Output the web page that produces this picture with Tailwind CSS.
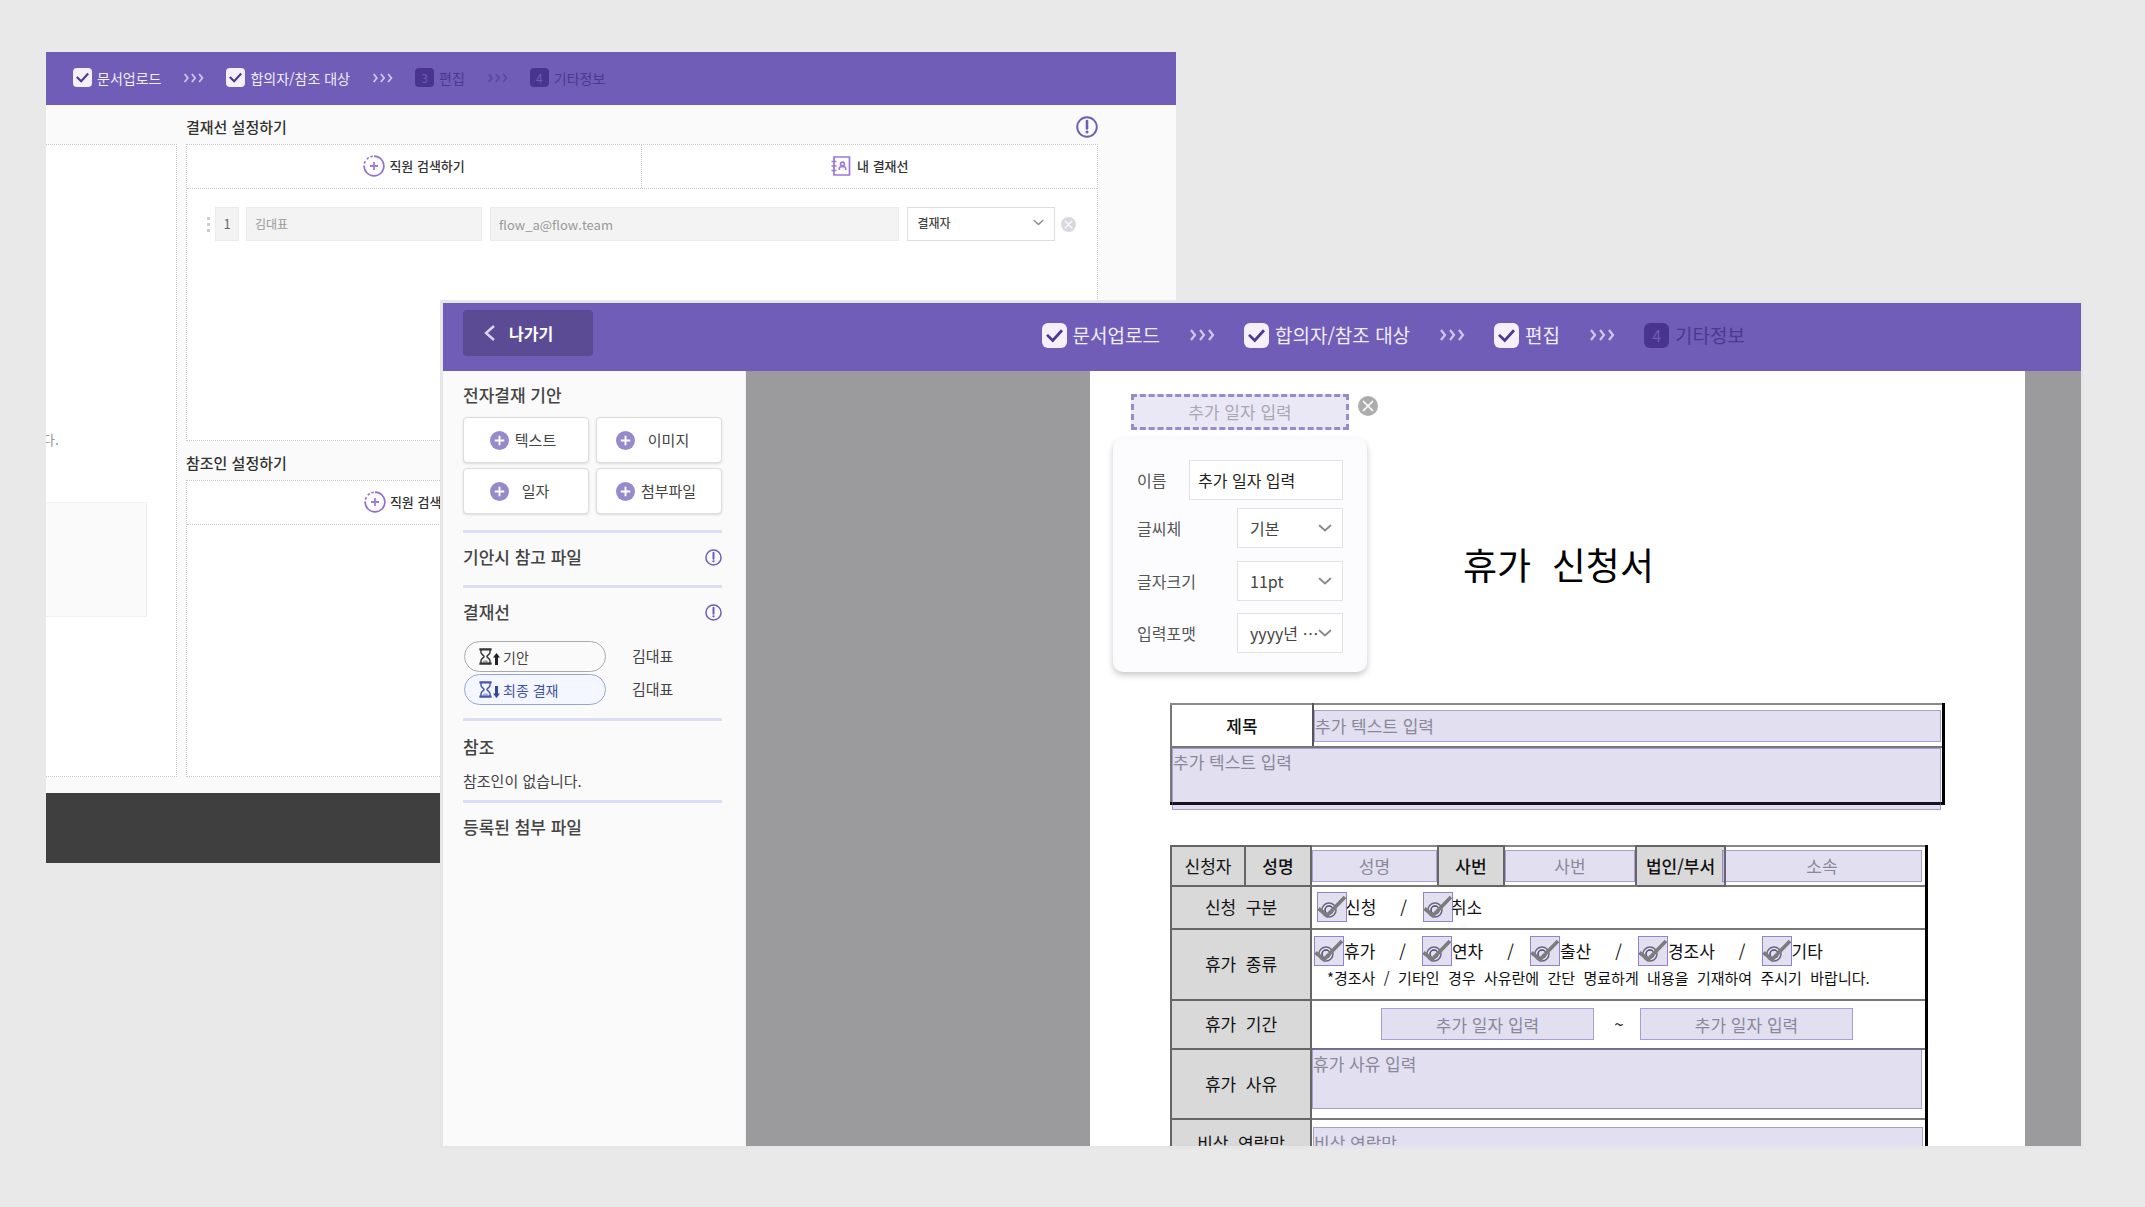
<!DOCTYPE html>
<html lang="ko">
<head>
<meta charset="utf-8">
<title>전자결재</title>
<script src="https://cdn.jsdelivr.net/npm/@tailwindcss/browser@4"></script>
</head>
<body class="bg-[#e9e9e9] font-['Noto_Sans_CJK_KR',sans-serif] text-[#333]">
<svg class="hidden">
  <symbol id="check" viewBox="0 0 20 20"><path d="M4 9.5 8.6 14 16 5.8" fill="none" stroke="#4b3796" stroke-width="2.2"/></symbol>
  <symbol id="arrows" viewBox="0 0 26 12"><path d="M2 1l4 5-4 5M11 1l4 5-4 5M20 1l4 5-4 5" fill="none" stroke="currentColor" stroke-width="2.2"/></symbol>
  <symbol id="info" viewBox="0 0 22 22"><circle cx="11" cy="11" r="9.8" fill="none" stroke="#705db8" stroke-width="1.9"/><path d="M11 5v7.5" stroke="#705db8" stroke-width="2.6" stroke-linecap="round"/><circle cx="11" cy="16" r="1.5" fill="#705db8"/></symbol>
  <symbol id="search-plus" viewBox="0 0 22 22"><circle cx="11" cy="11" r="9.9" fill="none" stroke="#8f6fd3" stroke-width="1.6" pathLength="100" stroke-dasharray="76 3 4 4 4 3 4 2" transform="rotate(-90 11 11)"/><path d="M11 7v8M7 11h8" stroke="#a07be0" stroke-width="1.8"/></symbol>
  <symbol id="book" viewBox="0 0 20 20"><path d="M3 1h15.500v18H3z" fill="none" stroke="#9a78dc" stroke-width="1.7"/><path d="M0.500 5.500h5M0.500 10h5M0.500 14.500h5" stroke="#9a78dc" stroke-width="1.7"/><circle cx="11.500" cy="8" r="1.9" fill="none" stroke="#9a78dc" stroke-width="1.6"/><path d="M8.300 14v-1.300a2 2 0 0 1 2-2h2.400a2 2 0 0 1 2 2V14" fill="none" stroke="#9a78dc" stroke-width="1.6"/></symbol>
  <symbol id="down" viewBox="0 0 14 8"><path d="M1.500 1.500 7 6.500l5.500-5" fill="none" stroke="#8a8a8a" stroke-width="1.8" stroke-linecap="round" stroke-linejoin="round"/></symbol>
  <symbol id="close" viewBox="0 0 20 20"><circle cx="10" cy="10" r="10" fill="currentColor"/><path d="M5.500 5.500l9 9M14.500 5.500l-9 9" stroke="#fff" stroke-width="1.7" stroke-linecap="round"/></symbol>
  <symbol id="add" viewBox="0 0 20 20"><circle cx="10" cy="10" r="10" fill="#978acb"/><path d="M10 5v10M5 10h10" stroke="#fff" stroke-width="2"/></symbol>
  <symbol id="hourglass" viewBox="0 0 13 18"><path d="M0 1.400h13M0 16.600h13" stroke="currentColor" stroke-width="2.4"/><path d="M1.700 2v2.500C1.700 7 5 7.800 5 9s-3.300 2-3.300 4.500V16M11.300 2v2.500C11.300 7 8 7.800 8 9s3.300 2 3.300 4.500V16" fill="none" stroke="currentColor" stroke-width="1.500"/><path d="M3 15.500c.6-2 2-2.500 3.500-2.500s2.900.5 3.500 2.500z" fill="currentColor" opacity=".4"/></symbol>
  <symbol id="stamp" viewBox="0 0 30 30"><circle cx="12" cy="18" r="7" fill="none" stroke="#6b6680" stroke-width="1.500"/><circle cx="12" cy="18" r="4" fill="none" stroke="#4f4a66" stroke-width="1.500"/><path d="M1.500 16.500 10 23.500 28 5" fill="none" stroke="#7c7c7c" stroke-width="3.600"/></symbol>
</svg>

<div class="relative h-screen min-h-[900px] w-full overflow-hidden">

  <!-- approval line window -->
  <section class="absolute top-[52px] left-[46px] flex h-[811px] w-[52.7%] flex-col overflow-hidden bg-[#fafafa]">
    <header class="flex h-[53px] shrink-0 items-center gap-[22px] bg-[#705db8] pb-0.5 pl-[27px] text-sm text-[#f1edfb]">
      <div class="flex items-center gap-[5px]"><span class="size-[19px] rounded bg-[#f4f1fd]"><svg class="size-[19px]"><use href="#check"/></svg></span>문서업로드</div>
      <svg class="h-[10px] w-[21px] text-[#cfc6ec]"><use href="#arrows"/></svg>
      <div class="flex items-center gap-[5px]"><span class="size-[19px] rounded bg-[#f4f1fd]"><svg class="size-[19px]"><use href="#check"/></svg></span>합의자/참조 대상</div>
      <svg class="h-[10px] w-[21px] text-[#cfc6ec]"><use href="#arrows"/></svg>
      <div class="flex items-center gap-[5px] text-[#4a3a8c]"><span class="size-[19px] rounded bg-[#49358f] text-center text-xs leading-[19px] text-[#705db8]">3</span>편집</div>
      <svg class="h-[10px] w-[21px] text-[#5a48a2]"><use href="#arrows"/></svg>
      <div class="flex items-center gap-[5px] text-[#4a3a8c]"><span class="size-[19px] rounded bg-[#49358f] text-center text-xs leading-[19px] text-[#705db8]">4</span>기타정보</div>
    </header>
    <div class="flex min-h-0 flex-1 gap-[9px] pr-[78px] pb-4">
      <div class="mt-[39px] w-[131px] shrink-0 border border-l-0 border-dotted border-[#c8c8c8] bg-white">
        <p class="mt-[282px] h-6 text-sm leading-6 text-[#999]"><span class="-ml-1">다.</span></p>
        <div class="mt-[51px] h-[115px] w-[101px] border border-l-0 border-[#f0f0f0] bg-[#fafafa]"></div>
      </div>
      <div class="flex min-w-0 flex-1 flex-col">
        <div class="flex h-[39px] shrink-0 items-center justify-between pt-1">
          <h2 class="text-[15px] leading-6 font-medium">결재선 설정하기</h2>
          <button aria-label="도움말"><svg class="size-[22px]"><use href="#info"/></svg></button>
        </div>
        <div class="h-[297px] shrink-0 border border-dotted border-[#c8c8c8] bg-white">
          <div class="grid h-[44px] grid-cols-2 border-b border-dotted border-[#c8c8c8] text-[13px] font-medium">
            <button class="flex items-center justify-center gap-1 border-r border-dotted border-[#c8c8c8] pb-0.5"><svg class="size-[22px]"><use href="#search-plus"/></svg>직원 검색하기</button>
            <button class="flex items-center justify-center gap-1.5 pb-0.5"><svg class="size-5"><use href="#book"/></svg>내 결재선</button>
          </div>
          <div class="mt-[18px] flex h-[34px] items-center pr-[21px] pl-5 text-[13px]">
            <svg class="mr-1 h-4 w-1 shrink-0" viewBox="0 0 4 16" fill="#ccc"><path d="M0 1h3v3H0zM0 7h3v3H0zM0 13h3v3H0z"/></svg>
            <span class="w-6 shrink-0 border border-[#ebebeb] bg-[#f3f3f3] text-center leading-8 text-[#666]">1</span>
            <input aria-label="이름" disabled value="김대표" class="ml-[7px] h-[34px] w-[236px] shrink-0 border border-[#ebebeb] bg-[#f3f3f3] px-2 pb-0.5 text-xs text-[#999]">
            <input aria-label="이메일" disabled value="flow_a@flow.team" class="ml-2 h-[34px] min-w-0 flex-1 border border-[#ebebeb] bg-[#f3f3f3] px-2 text-[13px] text-[#999]">
            <div class="relative ml-2 w-[148px] shrink-0">
              <select aria-label="결재 구분" class="h-[34px] w-full appearance-none border border-[#dedede] bg-white px-[9px] pb-0.5 text-xs font-medium text-[#444]"><option>결재자</option></select>
              <svg class="pointer-events-none absolute top-3 right-[11px] h-[7px] w-[11px]"><use href="#down"/></svg>
            </div>
            <button aria-label="삭제" class="ml-1.5 shrink-0"><svg class="size-[15px] text-[#d9d7df]"><use href="#close"/></svg></button>
          </div>
        </div>
        <h2 class="mt-2.5 mb-[5px] text-[15px] leading-6 font-medium">참조인 설정하기</h2>
        <div class="flex-1 border border-dotted border-[#c8c8c8] bg-white">
          <div class="grid h-[44px] grid-cols-2 border-b border-dotted border-[#c8c8c8] text-[13px] font-medium">
            <button class="flex items-center justify-center gap-1 pb-0.5"><svg class="size-[22px]"><use href="#search-plus"/></svg>직원 검색하기</button>
          </div>
        </div>
      </div>
    </div>
    <footer class="h-[70px] shrink-0 bg-[#3f3f3f]"></footer>
  </section>

  <!-- document editor window -->
  <section class="absolute top-[300px] right-[61px] bottom-[58px] left-[440px] flex flex-col overflow-hidden border-3 border-[#e6e6e6] bg-[#9b9b9d]">
    <header class="flex h-[68px] shrink-0 items-center bg-[#705db8] pr-[336px] pb-1 pl-5 text-[19px] text-[#f1edfb]">
      <button class="-mt-1 flex h-[46px] w-[130px] items-center gap-3.5 rounded bg-[#5a4b94] pl-[21px] text-base font-bold text-white"><svg class="h-4 w-[11px]" viewBox="0 0 11 16" fill="none" stroke="#dcd5f3" stroke-width="2.400"><path d="M10 1 2 8l8 7"/></svg>나가기</button>
      <div class="ml-auto flex items-center gap-[29px]">
        <div class="flex items-center gap-1.5"><span class="size-[25px] rounded-md bg-[#f4f1fd]"><svg class="size-[25px]"><use href="#check"/></svg></span>문서업로드</div>
        <svg class="h-3 w-[26px] text-[#cfc6ec]"><use href="#arrows"/></svg>
        <div class="flex items-center gap-1.5"><span class="size-[25px] rounded-md bg-[#f4f1fd]"><svg class="size-[25px]"><use href="#check"/></svg></span>합의자/참조 대상</div>
        <svg class="h-3 w-[26px] text-[#cfc6ec]"><use href="#arrows"/></svg>
        <div class="flex items-center gap-1.5"><span class="size-[25px] rounded-md bg-[#f4f1fd]"><svg class="size-[25px]"><use href="#check"/></svg></span>편집</div>
        <svg class="h-3 w-[26px] text-[#cfc6ec]"><use href="#arrows"/></svg>
        <div class="flex items-center gap-1.5 text-[#4a3a8c]"><span class="size-[25px] rounded-md bg-[#49358f] text-center text-base leading-[25px] text-[#705db8]">4</span>기타정보</div>
      </div>
    </header>

    <div class="flex min-h-0 flex-1">
      <aside class="w-[303px] shrink-0 border-r border-[#eee] bg-[#fafafa] pr-[23px] pl-5 text-[15px] text-[#444]">
        <h2 class="pt-3 pb-2.5 text-[17px] leading-6 font-medium">전자결재 기안</h2>
        <div class="grid grid-cols-2 gap-x-[7px] gap-y-[5px]">
          <button class="flex h-[46px] items-center justify-center gap-1.5 rounded border border-[#ddd] bg-white pr-1.5 shadow-sm"><svg class="size-[19px]"><use href="#add"/></svg><span class="w-[42px]">텍스트</span></button>
          <button class="flex h-[46px] items-center justify-center gap-1.5 rounded border border-[#ddd] bg-white pr-1.5 shadow-sm"><svg class="size-[19px]"><use href="#add"/></svg><span class="w-14">이미지</span></button>
          <button class="flex h-[46px] items-center justify-center gap-1.5 rounded border border-[#ddd] bg-white pr-1.5 shadow-sm"><svg class="size-[19px]"><use href="#add"/></svg><span class="w-[42px]">일자</span></button>
          <button class="flex h-[46px] items-center justify-center gap-1.5 rounded border border-[#ddd] bg-white pr-1.5 shadow-sm"><svg class="size-[19px]"><use href="#add"/></svg><span class="w-14">첨부파일</span></button>
        </div>
        <div class="mt-4 flex h-[55px] items-center justify-between border-t-3 border-[#dcdef8] pb-1">
          <h2 class="text-[17px] leading-6 font-medium">기안시 참고 파일</h2>
          <button aria-label="참고 파일 도움말"><svg class="size-[17px]"><use href="#info"/></svg></button>
        </div>
        <div class="flex h-[55px] items-center justify-between border-t-3 border-[#dcdef8] pb-1">
          <h2 class="text-[17px] leading-6 font-medium">결재선</h2>
          <button aria-label="결재선 도움말"><svg class="size-[17px]"><use href="#info"/></svg></button>
        </div>
        <ul class="mt-px flex flex-col gap-0.5 pl-px">
          <li class="flex h-[31px] items-center gap-[26px]"><span class="flex h-[31px] w-[142px] items-center rounded-full border border-[#aaa] pl-3.5 text-sm"><svg class="mr-px h-[17px] w-[13px] text-[#333]"><use href="#hourglass"/></svg><svg class="mt-1 mr-[3px] h-3 w-[7px]" viewBox="0 0 7 12" fill="#222"><path d="M3.500 0 7 4.500H5V12H2V4.500H0z"/></svg>기안</span>김대표</li>
          <li class="flex h-[31px] items-center gap-[26px]"><span class="flex h-[31px] w-[142px] items-center rounded-full border border-[#96a6d8] bg-[#f4f7ff] pl-3.5 text-sm text-[#3f51a8]"><svg class="mr-px h-[17px] w-[13px] text-[#4556b4]"><use href="#hourglass"/></svg><svg class="mt-1 mr-[3px] h-3 w-[7px]" viewBox="0 0 7 12" fill="#3147a8"><path d="M3.500 12 7 7.500H5V0H2v7.500H0z"/></svg>최종 결재</span>김대표</li>
        </ul>
        <div class="mt-[13px] h-[82px] border-t-3 border-[#dcdef8] pt-3.5">
          <h2 class="text-[17px] leading-6 font-medium">참조</h2>
          <p class="mt-2.5 leading-6">참조인이 없습니다.</p>
        </div>
        <h2 class="border-t-3 border-[#dcdef8] pt-3 text-[17px] leading-6 font-medium">등록된 첨부 파일</h2>
      </aside>

      <main class="mr-14 ml-[344px] min-w-[850px] flex-1 overflow-hidden bg-white text-[17px] text-[#111]">
        <div class="flex h-[332px] pl-[23px]">
          <div class="w-[265px] shrink-0 pt-[23px]">
            <div class="flex items-start pl-[18px]">
              <input aria-label="추가 일자" placeholder="추가 일자 입력" class="h-9 w-[218px] border-3 border-dashed border-[#978acd] bg-[#eae8f5] pb-0.5 text-center text-[17px] placeholder:text-[#aaa7b5]">
              <button aria-label="닫기" class="mt-0.5 ml-[9px]"><svg class="size-5 text-[#adadad]"><use href="#close"/></svg></button>
            </div>
            <form class="mt-2 flex h-[234px] w-[254px] flex-col rounded-[10px] bg-[#fcfcff] pt-[22px] pr-6 pl-6 text-base text-[#555] shadow-[0_3px_6px_rgba(0,0,0,0.22)]">
              <div class="flex h-10 items-center justify-between"><label for="fname">이름</label><input id="fname" value="추가 일자 입력" class="h-10 w-[154px] border border-[#e2e2e2] bg-white px-2 text-base text-[#222]"></div>
              <div class="mt-2 flex h-10 items-center justify-between"><label for="ffont">글씨체</label><div class="relative w-[106px]"><select id="ffont" class="h-10 w-full appearance-none border border-[#e2e2e2] bg-white pl-3 text-[#444]"><option>기본</option></select><svg class="pointer-events-none absolute top-4 right-[11px] h-2 w-[14px]"><use href="#down"/></svg></div></div>
              <div class="mt-[13px] flex h-10 items-center justify-between"><label for="fsize">글자크기</label><div class="relative w-[106px]"><select id="fsize" class="h-10 w-full appearance-none border border-[#e2e2e2] bg-white pl-3 text-[#444]"><option>11pt</option></select><svg class="pointer-events-none absolute top-4 right-[11px] h-2 w-[14px]"><use href="#down"/></svg></div></div>
              <div class="mt-3 flex h-10 items-center justify-between"><label for="fformat">입력포맷</label><div class="relative w-[106px]"><select id="fformat" class="h-10 w-full appearance-none border border-[#e2e2e2] bg-white pl-3 text-[#444]"><option>yyyy년 …</option></select><svg class="pointer-events-none absolute top-4 right-[11px] h-2 w-[14px]"><use href="#down"/></svg></div></div>
            </form>
          </div>
          <h1 class="pt-[166px] pl-[85px] text-[37px] leading-[54px] text-black">휴가&nbsp; 신청서</h1>
        </div>

        <table class="ml-20 w-[775px] table-fixed border-collapse border-2 border-r-3 border-b-3 border-t-[#888] border-r-black border-b-black border-l-[#777]">
          <tr class="h-[43px]">
            <th class="w-[142px] border-2 border-t-[#888] border-r-[#555] border-b-[#777] border-l-[#777] p-0 font-medium">제목</th>
            <td class="p-0"><input aria-label="제목" placeholder="추가 텍스트 입력" class="block h-8 w-[627px] border border-[#705db8]/50 bg-[#705db8]/20 placeholder:text-[#8a8799]"></td>
          </tr>
          <tr class="h-14">
            <td colspan="2" class="relative border-t-2 border-[#777] p-0"><textarea aria-label="내용" placeholder="추가 텍스트 입력" class="absolute top-0 left-0 h-[62px] w-[769px] resize-none border border-[#705db8]/50 bg-[#705db8]/20 placeholder:text-[#8a8799]"></textarea></td>
          </tr>
        </table>

        <table class="mt-10 ml-20 w-[758px] table-fixed border-collapse border-2 border-r-3 border-t-[#888] border-r-black border-b-[#777] border-l-[#777] [&_td]:border-b-2 [&_td]:border-[#777] [&_td]:p-0 [&_th]:border-2 [&_th]:border-[#666] [&_th]:bg-[#d9d9d9] [&_th]:p-0">
          <colgroup><col class="w-[74px]"><col class="w-[66px]"><col class="w-[127px]"><col class="w-[66px]"><col class="w-[132px]"><col class="w-[89px]"><col></colgroup>
          <tr class="h-10">
            <th class="font-normal">신청자</th><th class="font-medium">성명</th>
            <td><input aria-label="성명" placeholder="성명" class="block h-8 w-full border border-[#705db8]/50 bg-[#705db8]/20 text-center placeholder:text-[#8a8799]"></td>
            <th class="font-medium">사번</th>
            <td><input aria-label="사번" placeholder="사번" class="block h-8 w-full border border-[#705db8]/50 bg-[#705db8]/20 text-center placeholder:text-[#8a8799]"></td>
            <th class="font-medium">법인/부서</th>
            <td><input aria-label="소속" placeholder="소속" class="relative -ml-1 block h-8 w-[200px] border border-[#705db8]/50 bg-[#705db8]/20 text-center placeholder:text-[#8a8799]"></td>
          </tr>
          <tr class="h-[43px]">
            <th colspan="2" class="font-normal">신청&nbsp; 구분</th>
            <td colspan="5"><div class="flex items-center pl-[5px]">
              <label class="flex items-center"><span class="relative size-[30px]"><input type="checkbox" class="block size-[30px] appearance-none border border-[#705db8]/70 bg-[#705db8]/20"><svg class="pointer-events-none absolute inset-0 size-[30px]"><use href="#stamp"/></svg></span><span class="-ml-0.5">신청</span></label>
              <span class="mr-4 ml-6">/</span>
              <label class="flex items-center"><span class="relative size-[30px]"><input type="checkbox" class="block size-[30px] appearance-none border border-[#705db8]/70 bg-[#705db8]/20"><svg class="pointer-events-none absolute inset-0 size-[30px]"><use href="#stamp"/></svg></span><span class="-ml-0.5">취소</span></label>
            </div></td>
          </tr>
          <tr class="h-[71px]">
            <th colspan="2" class="font-normal">휴가&nbsp; 종류</th>
            <td colspan="5"><div class="flex items-center pl-0.5">
              <label class="flex items-center"><span class="relative size-[30px]"><input type="checkbox" class="block size-[30px] appearance-none border border-[#705db8]/70 bg-[#705db8]/20"><svg class="pointer-events-none absolute inset-0 size-[30px]"><use href="#stamp"/></svg></span>휴가</label>
              <span class="mr-4 ml-6">/</span>
              <label class="flex items-center"><span class="relative size-[30px]"><input type="checkbox" class="block size-[30px] appearance-none border border-[#705db8]/70 bg-[#705db8]/20"><svg class="pointer-events-none absolute inset-0 size-[30px]"><use href="#stamp"/></svg></span>연차</label>
              <span class="mr-4 ml-6">/</span>
              <label class="flex items-center"><span class="relative size-[30px]"><input type="checkbox" class="block size-[30px] appearance-none border border-[#705db8]/70 bg-[#705db8]/20"><svg class="pointer-events-none absolute inset-0 size-[30px]"><use href="#stamp"/></svg></span>출산</label>
              <span class="mr-4 ml-6">/</span>
              <label class="flex items-center"><span class="relative size-[30px]"><input type="checkbox" class="block size-[30px] appearance-none border border-[#705db8]/70 bg-[#705db8]/20"><svg class="pointer-events-none absolute inset-0 size-[30px]"><use href="#stamp"/></svg></span>경조사</label>
              <span class="mr-4 ml-6">/</span>
              <label class="flex items-center"><span class="relative size-[30px]"><input type="checkbox" class="block size-[30px] appearance-none border border-[#705db8]/70 bg-[#705db8]/20"><svg class="pointer-events-none absolute inset-0 size-[30px]"><use href="#stamp"/></svg></span>기타</label>
            </div>
            <p class="pb-0.5 pl-[15px] text-[15px] leading-6">*경조사&nbsp; /&nbsp; 기타인&nbsp; 경우&nbsp; 사유란에&nbsp; 간단&nbsp; 명료하게&nbsp; 내용을&nbsp; 기재하여&nbsp; 주시기&nbsp; 바랍니다.</p></td>
          </tr>
          <tr class="h-[49px]">
            <th colspan="2" class="font-normal">휴가&nbsp; 기간</th>
            <td colspan="5"><div class="flex items-center pl-[69px]">
              <input aria-label="시작일" placeholder="추가 일자 입력" class="h-8 w-[213px] border border-[#705db8]/50 bg-[#705db8]/20 text-center placeholder:text-[#8a8799]">
              <span class="w-[46px] pl-1 text-center">~</span>
              <input aria-label="종료일" placeholder="추가 일자 입력" class="h-8 w-[213px] border border-[#705db8]/50 bg-[#705db8]/20 text-center placeholder:text-[#8a8799]">
            </div></td>
          </tr>
          <tr class="h-[70px]">
            <th colspan="2" class="font-normal">휴가&nbsp; 사유</th>
            <td colspan="5" class="relative"><textarea aria-label="휴가 사유" placeholder="휴가 사유 입력" class="absolute -top-0.5 left-0 h-[61px] w-[610px] resize-none border border-[#705db8]/50 bg-[#705db8]/20 pt-0.5 placeholder:text-[#8a8799]"></textarea></td>
          </tr>
          <tr class="h-12">
            <th colspan="2" class="font-normal">비상&nbsp; 연락망</th>
            <td colspan="5"><input aria-label="비상 연락망" placeholder="비상 연락망" class="ml-px block h-8 w-[610px] border border-[#705db8]/50 bg-[#705db8]/20 placeholder:text-[#8a8799]"></td>
          </tr>
        </table>
      </main>
    </div>
  </section>
</div>
</body>
</html>
